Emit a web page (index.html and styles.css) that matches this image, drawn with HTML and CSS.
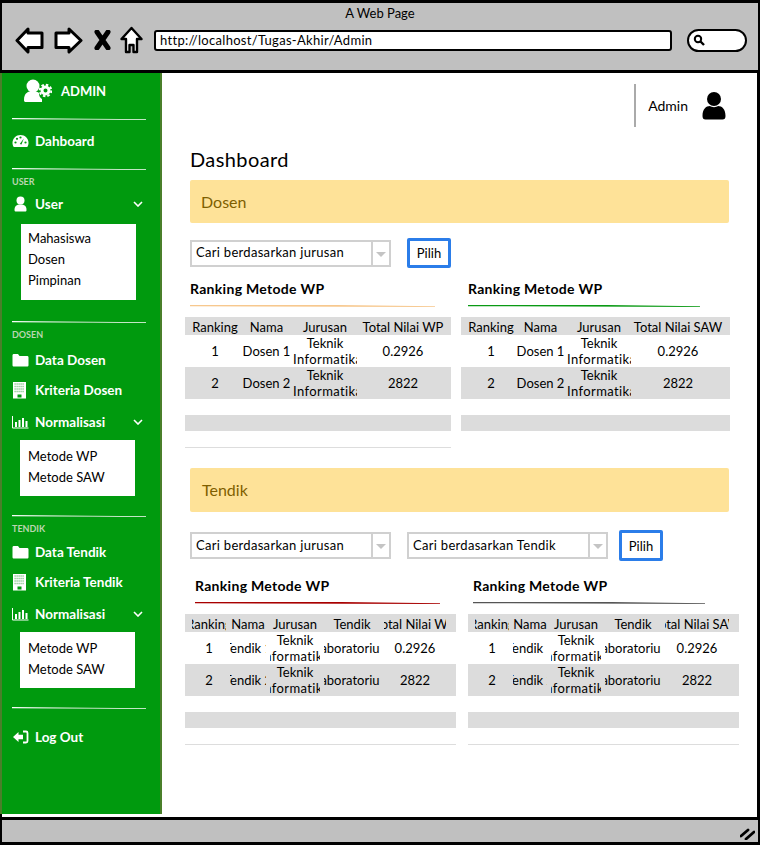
FILE: index.html
```html
<!DOCTYPE html>
<html lang="id">
<head>
    <meta charset="UTF-8">
    <meta name="viewport" content="width=device-width, initial-scale=1.0">
    <title>A Web Page</title>
    <link rel="stylesheet" href="styles.css">
</head>
<body>
    <div class="window">
        <!-- Browser bar -->
        <header class="browser-bar">
            <div class="browser-title">A Web Page</div>
            <div class="browser-tools">
                <svg class="tool-back" width="29" height="27" viewBox="0 0 29 27"><path d="M13 2 L2 13.500 L13 25 L13 20.500 L27 20.500 L27 6 L13 6 Z" fill="#fff" stroke="#000" stroke-width="3" stroke-linejoin="round"/></svg>
                <svg class="tool-forward" width="29" height="27" viewBox="0 0 29 27"><path d="M15 2 L27 13.500 L15 25 L15 20.500 L2 20.500 L2 6 L15 6 Z" fill="#fff" stroke="#000" stroke-width="3" stroke-linejoin="round"/></svg>
                <svg class="tool-stop" width="17" height="20" viewBox="0 0 17 20"><path d="M3 2 L14 18 M14 2 L3 18" stroke="#000" stroke-width="5" stroke-linecap="round"/></svg>
                <svg class="tool-home" width="23" height="28" viewBox="0 0 23 28"><path d="M11.500 2 L21.500 13 L17 13 L17 26 L13.500 26 L13.500 19 L9.500 19 L9.500 26 L6 26 L6 13 L1.500 13 Z" fill="#fff" stroke="#000" stroke-width="2.400" stroke-linejoin="round"/></svg>
                <div class="address">http://localhost/Tugas-Akhir/Admin</div>
                <div class="search-pill">
                    <svg width="12" height="12" viewBox="0 0 12 12"><circle cx="5" cy="5" r="3.200" fill="none" stroke="#000" stroke-width="2"/><path d="M7.500 7.500 L11 11" stroke="#000" stroke-width="2.400"/></svg>
                </div>
            </div>
        </header>

        <div class="browser-body">
            <!-- Sidebar -->
            <aside class="sidebar">
                <div class="brand">
                    <svg width="29" height="24" viewBox="0 0 29 24"><circle cx="10" cy="7" r="6.500" fill="#fff"/><path d="M1 21 C1 14 5 12 10 12 C13 12 15 13 16 14 C16 17 17 19 19 20 L19 23 L3 23 C1.500 23 1 22.500 1 21 Z" fill="#fff"/><circle cx="22.500" cy="11.500" r="3.500" fill="none" stroke="#fff" stroke-width="3"/><circle cx="22.500" cy="11.500" r="5.800" fill="none" stroke="#fff" stroke-width="2" stroke-dasharray="2.500 2"/></svg>
                    <span>ADMIN</span>
                </div>
                <div class="side-rule"></div>
                <a class="nav-item gap-6">
                    <svg class="nav-icon" width="17" height="14" viewBox="0 0 17 14"><path d="M8.500 1 C4 1 .5 4.500 .5 9 C.5 10.500 1 12 1.800 13 L15.200 13 C16 12 16.500 10.500 16.500 9 C16.500 4.500 13 1 8.500 1 Z" fill="#fff"/><g fill="#009a0e"><circle cx="3.500" cy="8.500" r="1.100"/><circle cx="5" cy="4.800" r="1.100"/><circle cx="8.500" cy="3.500" r="1.100"/><circle cx="13.500" cy="8.500" r="1.100"/><path d="M11.800 4.500 L9.500 10.500 L7.800 10 Z"/></g></svg>
                    <span>Dahboard</span>
                </a>
                <div class="side-rule gap-12"></div>
                <div class="side-label gap-5">USER</div>
                <a class="nav-item gap-2">
                    <svg class="nav-icon" width="17" height="16" viewBox="0 0 17 16"><circle cx="8.500" cy="4.500" r="4" fill="#fff"/><path d="M2.500 14 C2.500 10 4.500 8.500 8.500 8.500 C12.500 8.500 14.500 10 14.500 14 C14.500 15 14 15.500 13 15.500 L4 15.500 C3 15.500 2.500 15 2.500 14 Z" fill="#fff"/></svg>
                    <span>User</span>
                    <svg class="nav-chevron" width="10" height="6" viewBox="0 0 10 6"><path d="M1 1 L5 5 L9 1" fill="none" stroke="#fff" stroke-width="1.600"/></svg>
                </a>
                <ul class="sub-menu sub-three gap-5">
                    <li>Mahasiswa</li>
                    <li>Dosen</li>
                    <li>Pimpinan</li>
                </ul>
                <div class="side-rule gap-21"></div>
                <div class="side-label gap-5">DOSEN</div>
                <a class="nav-item gap-5">
                    <svg class="nav-icon" width="17" height="14" viewBox="0 0 17 14"><path d="M.5 2.500 C.5 1.500 1 1 2 1 L6 1 L7.500 3 L15 3 C16 3 16.500 3.500 16.500 4.500 L16.500 12 C16.500 13 16 13.500 15 13.500 L2 13.500 C1 13.500 .5 13 .5 12 Z" fill="#fff"/></svg>
                    <span>Data Dosen</span>
                </a>
                <a class="nav-item">
                    <svg class="nav-icon" width="17" height="17" viewBox="0 0 17 17"><rect x="1" y="0" width="13" height="16.500" fill="#fff"/><path d="M2.500 2 H12.500 M2.500 4.500 H12.500 M2.500 7 H12.500 M2.500 9.500 H12.500" stroke="#7fc486" stroke-width="1.400" stroke-dasharray="1.200 .8"/><rect x="5.500" y="12.500" width="4" height="3" fill="#009a0e"/></svg>
                    <span>Kriteria Dosen</span>
                </a>
                <a class="nav-item gap-2">
                    <svg class="nav-icon" width="17" height="14" viewBox="0 0 17 14"><path d="M.5 1 V13 H16.500" fill="none" stroke="#fff" stroke-width="1"/><path d="M3 7 H5 V12 H3 Z M6.500 5 H8.500 V12 H6.500 Z M10 3 H12 V12 H10 Z M13.500 6 H15.500 V12 H13.500 Z" fill="#fff"/></svg>
                    <span>Normalisasi</span>
                    <svg class="nav-chevron" width="10" height="6" viewBox="0 0 10 6"><path d="M1 1 L5 5 L9 1" fill="none" stroke="#fff" stroke-width="1.600"/></svg>
                </a>
                <ul class="sub-menu sub-two gap-3">
                    <li>Metode WP</li>
                    <li>Metode SAW</li>
                </ul>
                <div class="side-rule gap-19"></div>
                <div class="side-label gap-5">TENDIK</div>
                <a class="nav-item gap-3">
                    <svg class="nav-icon" width="17" height="14" viewBox="0 0 17 14"><path d="M.5 2.500 C.5 1.500 1 1 2 1 L6 1 L7.500 3 L15 3 C16 3 16.500 3.500 16.500 4.500 L16.500 12 C16.500 13 16 13.500 15 13.500 L2 13.500 C1 13.500 .5 13 .5 12 Z" fill="#fff"/></svg>
                    <span>Data Tendik</span>
                </a>
                <a class="nav-item">
                    <svg class="nav-icon" width="17" height="17" viewBox="0 0 17 17"><rect x="1" y="0" width="13" height="16.500" fill="#fff"/><path d="M2.500 2 H12.500 M2.500 4.500 H12.500 M2.500 7 H12.500 M2.500 9.500 H12.500" stroke="#7fc486" stroke-width="1.400" stroke-dasharray="1.200 .8"/><rect x="5.500" y="12.500" width="4" height="3" fill="#009a0e"/></svg>
                    <span>Kriteria Tendik</span>
                </a>
                <a class="nav-item gap-2">
                    <svg class="nav-icon" width="17" height="14" viewBox="0 0 17 14"><path d="M.5 1 V13 H16.500" fill="none" stroke="#fff" stroke-width="1"/><path d="M3 7 H5 V12 H3 Z M6.500 5 H8.500 V12 H6.500 Z M10 3 H12 V12 H10 Z M13.500 6 H15.500 V12 H13.500 Z" fill="#fff"/></svg>
                    <span>Normalisasi</span>
                    <svg class="nav-chevron" width="10" height="6" viewBox="0 0 10 6"><path d="M1 1 L5 5 L9 1" fill="none" stroke="#fff" stroke-width="1.600"/></svg>
                </a>
                <ul class="sub-menu sub-two gap-3">
                    <li>Metode WP</li>
                    <li>Metode SAW</li>
                </ul>
                <div class="side-rule gap-19"></div>
                <a class="nav-item gap-13">
                    <svg class="nav-icon" width="17" height="14" viewBox="0 0 17 14"><path d="M1 7 L6.500 2 L6.500 4.800 L11 4.800 L11 9.200 L6.500 9.200 L6.500 12 Z" fill="#fff"/><path d="M11 1.500 H14 C15 1.500 15.500 2 15.500 3 V11 C15.500 12 15 12.500 14 12.500 H11" fill="none" stroke="#fff" stroke-width="1.800"/></svg>
                    <span>Log Out</span>
                </a>
            </aside>

            <!-- Main content -->
            <main class="main">
                <div class="topbar">
                    <div class="user-box">
                        <span>Admin</span>
                        <svg width="24" height="28" viewBox="0 0 24 28"><circle cx="12" cy="7" r="7" fill="#000"/><path d="M.5 24 C.5 17 4 14 8 14 C10 15.500 14 15.500 16 14 C20 14 23.500 17 23.500 24 C23.500 26.500 22.500 27.500 20.500 27.500 L3.500 27.500 C1.500 27.500 .5 26.500 .5 24 Z" fill="#000"/></svg>
                    </div>
                </div>

                <h1 class="page-title">Dashboard</h1>

                <!-- Dosen -->
                <div class="alert alert-dosen">Dosen</div>
                <div class="filter-row filter-dosen">
                    <div class="select"><span>Cari berdasarkan jurusan</span><i class="select-arrow"></i></div>
                    <button class="btn-pilih">Pilih</button>
                </div>
                <div class="panels panels-dosen">
                    <section class="panel panel-dl">
                        <h2 class="panel-title">Ranking Metode WP</h2>
                        <div class="panel-rule rule-orange"></div>
                        <div class="rank-table">
                            <div class="t-row t-head cols-dl"><div class="cell">Ranking</div><div class="cell">Nama</div><div class="cell">Jurusan</div><div class="cell">Total Nilai WP</div></div>
                            <div class="t-row t-body cols-dl"><div class="cell">1</div><div class="cell">Dosen 1</div><div class="cell stack"><span>Teknik</span><span>Informatika</span></div><div class="cell">0.2926</div></div>
                            <div class="t-row t-body t-grey cols-dl"><div class="cell">2</div><div class="cell">Dosen 2</div><div class="cell stack"><span>Teknik</span><span>Informatika</span></div><div class="cell">2822</div></div>
                            <div class="t-empty"></div>
                            <div class="t-empty t-grey"></div>
                            <div class="t-empty t-line"></div>
                        </div>
                    </section>
                    <section class="panel panel-dr">
                        <h2 class="panel-title">Ranking Metode WP</h2>
                        <div class="panel-rule rule-green"></div>
                        <div class="rank-table">
                            <div class="t-row t-head cols-dr"><div class="cell">Ranking</div><div class="cell">Nama</div><div class="cell">Jurusan</div><div class="cell">Total Nilai SAW</div></div>
                            <div class="t-row t-body cols-dr"><div class="cell">1</div><div class="cell">Dosen 1</div><div class="cell stack"><span>Teknik</span><span>Informatika</span></div><div class="cell">0.2926</div></div>
                            <div class="t-row t-body t-grey cols-dr"><div class="cell">2</div><div class="cell">Dosen 2</div><div class="cell stack"><span>Teknik</span><span>Informatika</span></div><div class="cell">2822</div></div>
                            <div class="t-empty"></div>
                            <div class="t-empty t-grey"></div>
                        </div>
                    </section>
                </div>

                <!-- Tendik -->
                <div class="alert alert-tendik">Tendik</div>
                <div class="filter-row filter-tendik">
                    <div class="select"><span>Cari berdasarkan jurusan</span><i class="select-arrow"></i></div>
                    <div class="select"><span>Cari berdasarkan Tendik</span><i class="select-arrow"></i></div>
                    <button class="btn-pilih">Pilih</button>
                </div>
                <div class="panels panels-tendik">
                    <section class="panel panel-tl">
                        <h2 class="panel-title">Ranking Metode WP</h2>
                        <div class="panel-rule rule-red"></div>
                        <div class="rank-table">
                            <div class="t-row t-head cols-tl"><div class="cell">Ranking</div><div class="cell">Nama</div><div class="cell">Jurusan</div><div class="cell">Tendik</div><div class="cell">Total Nilai WP</div></div>
                            <div class="t-row t-body cols-tl"><div class="cell">1</div><div class="cell">Tendik 1</div><div class="cell stack"><span>Teknik</span><span>Informatika</span></div><div class="cell">Laboratorium</div><div class="cell">0.2926</div></div>
                            <div class="t-row t-body t-grey cols-tl"><div class="cell">2</div><div class="cell">Tendik 2</div><div class="cell stack"><span>Teknik</span><span>Informatika</span></div><div class="cell">Laboratorium</div><div class="cell">2822</div></div>
                            <div class="t-empty"></div>
                            <div class="t-empty t-grey"></div>
                            <div class="t-empty t-line"></div>
                        </div>
                    </section>
                    <section class="panel panel-tr">
                        <h2 class="panel-title">Ranking Metode WP</h2>
                        <div class="panel-rule rule-dark"></div>
                        <div class="rank-table">
                            <div class="t-row t-head cols-tr"><div class="cell">Ranking</div><div class="cell">Nama</div><div class="cell">Jurusan</div><div class="cell">Tendik</div><div class="cell">Total Nilai SAW</div></div>
                            <div class="t-row t-body cols-tr"><div class="cell">1</div><div class="cell">Tendik 1</div><div class="cell stack"><span>Teknik</span><span>Informatika</span></div><div class="cell">Laboratorium</div><div class="cell">0.2926</div></div>
                            <div class="t-row t-body t-grey cols-tr"><div class="cell">2</div><div class="cell">Tendik 2</div><div class="cell stack"><span>Teknik</span><span>Informatika</span></div><div class="cell">Laboratorium</div><div class="cell">2822</div></div>
                            <div class="t-empty"></div>
                            <div class="t-empty t-grey"></div>
                            <div class="t-empty t-line"></div>
                        </div>
                    </section>
                </div>
            </main>
        </div>

        <!-- Status bar -->
        <footer class="status-bar">
            <svg width="15" height="12" viewBox="0 0 15 12"><path d="M1 8 L8 2 M6 11 L14 4" stroke="#000" stroke-width="2.800" stroke-linecap="round"/></svg>
        </footer>
    </div>
</body>
</html>
```

FILE: styles.css
```css
* {
    box-sizing: border-box;
}

body {
    margin: 0;
    background: #fff;
    font-family: "Lato", "Open Sans", sans-serif;
    color: #000;
}

.window {
    width: 760px;
    height: 846px;
    padding-bottom: 1px;
    display: flex;
    flex-direction: column;
    overflow: hidden;
}

/* Browser bar */
.browser-bar {
    height: 73px;
    flex: none;
    background: #c0c0c0;
    border: 3px solid #000;
    border-width: 3px 2px 3px 2px;
}

.browser-title {
    height: 20px;
    line-height: 21px;
    text-align: center;
    font-size: 13px;
}

.browser-tools {
    display: flex;
    align-items: center;
    padding-left: 13px;
    height: 32px;
    margin-top: 1px;
}

.tool-back {
    margin-right: 10px;
}

.tool-forward {
    margin-right: 11px;
}

.tool-stop {
    margin-right: 9px;
}

.tool-home {
    margin-right: 11px;
}

.address {
    width: 518px;
    height: 21px;
    background: #fff;
    border: 2px solid #000;
    border-radius: 3px;
    font-size: 13px;
    line-height: 17px;
    padding-left: 4px;
    letter-spacing: .3px;
}

.search-pill {
    width: 60px;
    height: 23px;
    margin-left: 15px;
    background: #fff;
    border: 2px solid #000;
    border-radius: 12px;
    display: flex;
    align-items: center;
    padding-left: 4px;
}

.browser-body {
    flex: 1;
    display: flex;
    border-right: 3px solid #000;
    border-left: 2px solid #000;
    min-height: 0;
}

/* Sidebar */
.sidebar {
    width: 162px;
    margin-left: -2px;
    margin-bottom: 3px;
    flex: none;
    background: #009a0e;
    border-left: 2px solid #4a7f2a;
    border-right: 2px solid #4a7f2a;
    color: #fff;
}

.brand {
    height: 45px;
    display: flex;
    align-items: center;
    padding: 0 0 10px 21px;
    font-size: 13px;
    font-weight: 700;
}

.brand span {
    margin-left: 9px;
}

.side-rule {
    width: 134px;
    height: 2px;
    margin-left: 10px;
    background: linear-gradient(90deg, #fff, #cfe6cf 60%, #fff);
    clip-path: polygon(0 0, 100% 60%, 100% 100%, 0 60%);
}

.side-label {
    height: 12px;
    line-height: 14px;
    margin-left: 10px;
    font-size: 9px;
    font-weight: 700;
    color: #b9d6b0;
}

.nav-item {
    height: 30px;
    display: flex;
    align-items: center;
    padding-left: 10px;
    font-size: 13.500px;
    font-weight: 700;
}

.nav-icon {
    flex: none;
    margin-right: 6px;
}

.nav-chevron {
    margin-left: auto;
    margin-right: 17px;
}

.sub-menu {
    width: 115px;
    margin: 0 0 0 19px;
    padding: 4px 7px 9px;
    list-style: none;
    background: #fff;
    color: #000;
    font-size: 13px;
    line-height: 21px;
}

.sub-two {
    margin-left: 18px;
    padding: 6px 8px 8px;
}

.gap-2 { margin-top: 2px; }
.gap-3 { margin-top: 3px; }
.gap-5 { margin-top: 5px; }
.gap-6 { margin-top: 6px; }
.gap-12 { margin-top: 12px; }
.gap-13 { margin-top: 13px; }
.gap-19 { margin-top: 19px; }
.gap-21 { margin-top: 21px; }

/* Main */
.main {
    flex: 1;
    min-width: 0;
    padding-left: 28px;
}

.topbar {
    display: flex;
    justify-content: flex-end;
    padding: 11px 31px 0 0;
}

.user-box {
    height: 43px;
    display: flex;
    align-items: center;
    gap: 14px;
    padding-left: 12px;
    border-left: 2px solid #aaa;
    font-size: 14px;
}

.page-title {
    margin: 20px 0 9px;
    font-size: 20px;
    line-height: 24px;
    font-weight: 400;
    letter-spacing: .4px;
}

.alert {
    width: 539px;
    background: #fee298;
    color: #7f5f00;
    border-radius: 2px;
    font-size: 16px;
    display: flex;
    align-items: center;
}

.alert-dosen {
    height: 43px;
    padding-left: 11px;
}

.alert-tendik {
    height: 44px;
    margin-top: 20px;
    padding: 0 0 1px 12px;
}

.filter-row {
    display: flex;
    align-items: center;
    gap: 16px;
}

.filter-dosen {
    margin-top: 15px;
}

.filter-tendik {
    margin-top: 18px;
}

.select {
    width: 201px;
    height: 27px;
    display: flex;
    align-items: center;
    justify-content: space-between;
    border: 2px solid #d0d0d0;
    padding-left: 4px;
    background: #fff;
    font-size: 13px;
    letter-spacing: .3px;
}

.select span {
    padding-bottom: 2px;
}

.select-arrow {
    width: 18px;
    height: 23px;
    border-left: 2px solid #d0d0d0;
    position: relative;
}

/* small triangle lying over the select button */
.select-arrow::after {
    content: "";
    position: absolute;
    left: 3px;
    top: 10px;
    border: 5px solid transparent;
    border-top-color: #c4c4c4;
    border-bottom: 0;
}

.btn-pilih {
    width: 44px;
    height: 30px;
    background: #fff;
    border: 3px solid #2b7de9;
    border-radius: 2px;
    padding: 0;
    font-family: inherit;
    font-size: 13px;
    color: #000;
}

.filter-tendik .btn-pilih {
    height: 31px;
    margin-left: -5px;
}

.panels {
    display: flex;
    margin-left: -5px;
}

.panels-dosen {
    gap: 10px;
    margin-top: 12px;
}

.panels-tendik {
    gap: 12px;
    margin-top: 16px;
}

.panel {
    flex: none;
}

.panel-dl { width: 266px; }
.panel-dr { width: 269px; }
.panel-tl { width: 271px; }
.panel-tr { width: 271px; }

.panel-title {
    margin: 0;
    height: 18px;
    line-height: 18px;
    font-size: 14px;
    font-weight: 700;
    letter-spacing: .3px;
}

.panel-dl .panel-title,
.panel-dl .panel-rule { margin-left: 5px; }
.panel-dr .panel-title,
.panel-dr .panel-rule { margin-left: 7px; }
.panel-tl .panel-title,
.panel-tl .panel-rule { margin-left: 10px; }
.panel-tr .panel-title,
.panel-tr .panel-rule { margin-left: 5px; }

.panel-rule {
    height: 2px;
    margin-top: 7px;
    clip-path: polygon(0 0, 60% 0, 100% 60%, 100% 100%, 0 60%);
}

.panel-dl .panel-rule { width: 245px; }
.panel-dr .panel-rule { width: 232px; }
.panel-tl .panel-rule { width: 245px; }
.panel-tr .panel-rule { width: 232px; }

.rule-orange { background: #f7c88e; }
.rule-green { background: #0a9a14; }
.rule-red { background: #a80000; }
.rule-dark { background: #555; }

.rank-table {
    margin-top: 10px;
    font-size: 13px;
}

.t-row {
    display: grid;
    gap: 2px;
}

.cols-dl { grid-template-columns: 50px 49px 64px 88px; padding-left: 5px; }
.cols-dr { grid-template-columns: 46px 49px 64px 90px; padding-left: 7px; }
.cols-tl { grid-template-columns: 34px 36px 50px 56px 62px; padding-left: 7px; gap: 4px; }
.cols-tr { grid-template-columns: 34px 34px 50px 56px 64px; padding-left: 7px; gap: 4px; }

.t-head {
    height: 18px;
    padding-top: 1px;
    background: #dcdcdc;
}

.t-body {
    height: 32px;
}

.t-grey {
    background: #dcdcdc;
}

.cell {
    display: flex;
    align-items: center;
    justify-content: center;
    white-space: nowrap;
    overflow: hidden;
}

.stack {
    flex-direction: column;
    line-height: 16px;
}

.stack span + span {
    letter-spacing: .4px;
}

/* the dosen tables cut "Informatika" on the right only */
.cols-dl .stack span + span,
.cols-dr .stack span + span {
    align-self: flex-start;
}

.t-empty {
    height: 16px;
}

.t-line {
    border-bottom: 1px solid #ddd;
    height: 17px;
}

/* Status bar */
.status-bar {
    height: 28px;
    flex: none;
    background: #c0c0c0;
    border: 3px solid #000;
    border-width: 3px 2px 3px 2px;
    display: flex;
    align-items: flex-end;
    justify-content: flex-end;
    padding: 0 3px 2px 0;
}
```
